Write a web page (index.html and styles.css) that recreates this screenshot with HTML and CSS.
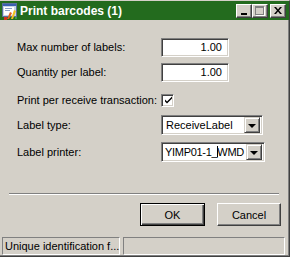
FILE: index.html
```html
<!DOCTYPE html>
<html>
<head>
<meta charset="utf-8">
<link rel="stylesheet" href="styles.css">
</head>
<body>
<div class="window">
  <div class="titlebar">
    <svg class="app-icon" width="16" height="17" viewBox="0 0 16 17">
      <rect x="0.5" y="0.5" width="14" height="13" fill="#c8d4e8" stroke="#5a6f9a"/>
      <rect x="1" y="1" width="13" height="2" fill="#3a5fb0"/>
      <rect x="2" y="4" width="10" height="8" fill="#ffffff"/>
      <rect x="3" y="5" width="7" height="1" fill="#8aa0c8"/>
      <rect x="3" y="7" width="5" height="1" fill="#8aa0c8"/>
      <polygon points="9,16 12,7 14,8 11,16" fill="#f0c020"/>
      <polygon points="5,16 8,9 10,10 7,16" fill="#e06020"/>
      <rect x="2" y="14" width="3" height="3" fill="#d03020"/>
      <rect x="13" y="14" width="2" height="2" fill="#40a040"/>
    </svg>
    <span class="title">Print barcodes (1)</span>
    <div class="caption-buttons">
      <div class="cap"><span class="glyph-min"></span></div>
      <div class="cap"><span class="glyph-max"></span></div>
      <div class="cap close">
        <svg width="8" height="7" viewBox="0 0 8 7"><path d="M0 0h2l2 2.5 2-2.5h2l-3 3.5 3 3.5h-2l-2-2.5-2 2.5h-2l3-3.5z" fill="#000"/></svg>
      </div>
    </div>
  </div>
  <div class="body">
    <div class="form">
      <div class="row r1"><span class="label">Max number of labels:</span><div class="field num">1.00</div></div>
      <div class="row r2"><span class="label">Quantity per label:</span><div class="field num">1.00</div></div>
      <div class="row r3"><span class="label">Print per receive transaction:</span>
        <div class="checkbox"><svg width="9" height="9" viewBox="0 0 9 9"><path d="M1 3.5l2 2 5-5v2l-5 5-2-2z" fill="#000"/></svg></div>
      </div>
      <div class="row r4"><span class="label">Label type:</span>
        <div class="combo"><span class="combo-text">ReceiveLabel</span><span class="drop"><span class="arrow"></span></span></div>
      </div>
      <div class="row r5"><span class="label">Label printer:</span>
        <div class="combo wide"><span class="combo-text">YIMP01-1_<span class="cursor"></span>WMD</span><span class="drop"><span class="arrow"></span></span></div>
      </div>
    </div>
    <div class="separator"></div>
    <div class="actions">
      <div class="btn default">OK</div>
      <div class="btn">Cancel</div>
    </div>
  </div>
  <div class="statusbar">
    <div class="panel p1">Unique identification f...</div>
    <div class="panel p2"></div>
  </div>
</div>
</body>
</html>
```

FILE: styles.css
```css
* { box-sizing: border-box; }
html, body { margin: 0; padding: 0; }
body {
  width: 290px;
  height: 257px;
  background: #d4d0c8;
  font-family: "Liberation Sans", Arial, sans-serif;
  font-size: 11px;
  color: #000;
  overflow: hidden;
}
.window {
  width: 290px;
  height: 257px;
  display: flex;
  flex-direction: column;
  background: #d4d0c8;
  border-top: 1px solid #d4d0c8;
  border-right: 1px solid #404040;
  border-bottom: 1px solid #404040;
  box-shadow: inset -1px -1px 0 #808080;
}
.titlebar {
  height: 19px;
  background: #236b1e;
  display: flex;
  align-items: center;
  padding-left: 2px;
  padding-right: 3px;
  flex-shrink: 0;
}
.app-icon { flex-shrink: 0; margin-top: 1px; }
.title {
  color: #fff;
  font-weight: bold;
  font-size: 12px;
  margin-left: 2px;
  flex: 1;
  white-space: nowrap;
}
.caption-buttons { display: flex; }
.cap {
  width: 16px;
  height: 14px;
  background: #d4d0c8;
  border-top: 1px solid #fff;
  border-left: 1px solid #fff;
  border-right: 1px solid #404040;
  border-bottom: 1px solid #404040;
  box-shadow: inset -1px -1px 0 #808080;
  position: relative;
  display: flex;
  align-items: center;
  justify-content: center;
}
.cap.close { margin-left: 2px; }
.glyph-min {
  position: absolute;
  left: 4px;
  top: 8px;
  width: 6px;
  height: 2px;
  background: #000;
}
.glyph-max {
  width: 9px;
  height: 9px;
  border: 1px solid #808080;
  border-top-width: 2px;
  box-shadow: 1px 1px 0 #fff;
  margin-top: -1px;
  margin-left: -1px;
}
.body {
  flex: 1;
  display: flex;
  flex-direction: column;
}
.form {
  padding-top: 15px;
  padding-left: 17px;
  display: flex;
  flex-direction: column;
}
.row {
  display: flex;
  align-items: center;
  height: 24px;
}
.r2 { margin-top: 1px; }
.r3 { margin-top: 4px; }
.r4 { margin-top: 1px; }
.r5 { margin-top: 3px; }
.label {
  width: 144px;
  flex-shrink: 0;
  white-space: nowrap;
}
.field {
  width: 68px;
  height: 19px;
  background: #fff;
  border-top: 1px solid #808080;
  border-left: 1px solid #808080;
  border-right: 1px solid #fff;
  border-bottom: 1px solid #fff;
  box-shadow: inset 1px 1px 0 #404040, inset -1px -1px 0 #d4d0c8;
  display: flex;
  align-items: center;
}
.field.num { justify-content: flex-end; padding-right: 6px; }
.checkbox {
  width: 13px;
  height: 13px;
  background: #fff;
  border-top: 1px solid #808080;
  border-left: 1px solid #808080;
  border-right: 1px solid #fff;
  border-bottom: 1px solid #fff;
  box-shadow: inset 1px 1px 0 #404040, inset -1px -1px 0 #d4d0c8;
  display: flex;
  align-items: center;
  justify-content: center;
  padding: 1px 0 0 1px;
}
.checkbox svg { display: block; }
.combo {
  width: 102px;
  height: 20px;
  background: #fff;
  border-top: 1px solid #808080;
  border-left: 1px solid #808080;
  border-right: 1px solid #fff;
  border-bottom: 1px solid #fff;
  box-shadow: inset 1px 1px 0 #404040, inset -1px -1px 0 #d4d0c8;
  display: flex;
  align-items: center;
  padding: 2px 2px 2px 4px;
}
.combo.wide { width: 104px; padding-left: 3px; }
.combo.wide .combo-text { letter-spacing: -0.3px; }
.combo-text {
  flex: 1;
  white-space: nowrap;
  overflow: hidden;
}
.cursor {
  display: inline-block;
  width: 1px;
  height: 11px;
  background: #000;
  vertical-align: -1px;
  margin: 0 -1px 0 0;
}
.drop {
  width: 16px;
  height: 16px;
  background: #d4d0c8;
  border-top: 1px solid #d4d0c8;
  border-left: 1px solid #d4d0c8;
  border-right: 1px solid #404040;
  border-bottom: 1px solid #404040;
  box-shadow: inset 1px 1px 0 #fff, inset -1px -1px 0 #808080;
  display: flex;
  align-items: center;
  justify-content: center;
  flex-shrink: 0;
}
.arrow {
  width: 0;
  height: 0;
  border-left: 4px solid transparent;
  border-right: 4px solid transparent;
  border-top: 4px solid #000;
  margin-top: 1px;
}
.separator {
  margin-top: 29px;
  margin-left: 9px;
  width: 270px;
  height: 2px;
  border-top: 1px solid #808080;
  border-bottom: 1px solid #fff;
}
.actions {
  margin-top: 8px;
  display: flex;
  justify-content: flex-end;
  gap: 12px;
  padding-right: 8px;
}
.btn {
  width: 64px;
  height: 23px;
  background: #d4d0c8;
  border-top: 1px solid #fff;
  border-left: 1px solid #fff;
  border-right: 1px solid #404040;
  border-bottom: 1px solid #404040;
  box-shadow: inset -1px -1px 0 #808080;
  display: flex;
  align-items: center;
  justify-content: center;
}
.btn.default {
  width: 65px;
  border: 1px solid #000;
  box-shadow: inset 1px 1px 0 #fff, inset -1px -1px 0 #404040, inset -2px -2px 0 #808080;
}
.statusbar {
  margin-top: auto;
  height: 20px;
  display: flex;
  padding: 1px 0 1px 2px;
  gap: 3px;
  flex-shrink: 0;
}
.panel {
  border-top: 1px solid #808080;
  border-left: 1px solid #808080;
  border-right: 1px solid #fff;
  border-bottom: 1px solid #fff;
  height: 18px;
  display: flex;
  align-items: center;
  padding-left: 2px;
  white-space: nowrap;
  overflow: hidden;
}
.p1 { width: 118px; }
.p2 { width: 162px; }
```
